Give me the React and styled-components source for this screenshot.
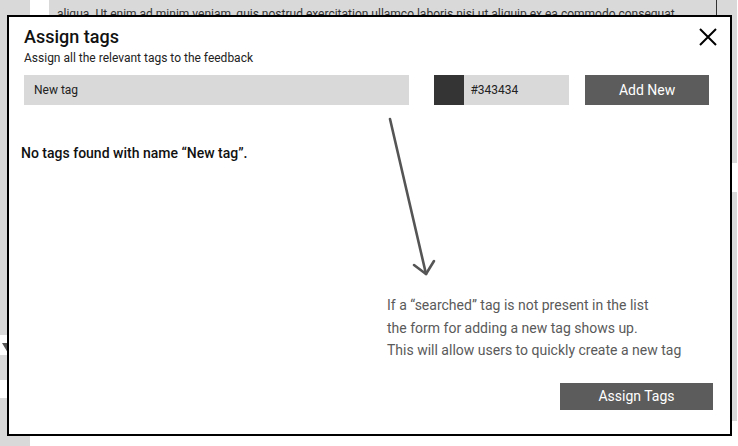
import React from 'react';
import styled, { createGlobalStyle } from 'styled-components';

const GlobalStyle = createGlobalStyle`
  html, body {
    margin: 0;
    padding: 0;
    background: #fff;
  }
  body {
    font-family: Roboto, "Liberation Sans", sans-serif;
    overflow: hidden;
  }
`;

const LEFT_BLOCKS = [
  { height: 335, filled: true },
  { height: 20, filled: false, caret: true },
  { height: 25, filled: true },
  { height: 18, filled: false },
  { height: 48, filled: true },
];

const RIGHT_BLOCKS = [
  { height: 163, filled: true },
  { height: 29, filled: false },
  { height: 229, filled: true },
  { height: 25, filled: false },
];

function BackgroundColumn({ blocks, width }) {
  return (
    <SideColumn $width={width}>
      {blocks.map((block, index) => (
        <SideBlock key={index} $height={block.height} $filled={block.filled}>
          {block.caret && <Caret />}
        </SideBlock>
      ))}
    </SideColumn>
  );
}

function CloseIcon() {
  return (
    <svg width="20" height="20" viewBox="0 0 20 20">
      <path
        d="M2 2 L18 18 M18 2 L2 18"
        stroke="#000"
        strokeWidth="2"
        fill="none"
      />
    </svg>
  );
}

function AnnotationArrow() {
  return (
    <ArrowSvg width="60" height="170" viewBox="0 0 60 170">
      <g
        stroke="#555"
        strokeWidth="2.6"
        fill="none"
        strokeLinecap="round"
        strokeLinejoin="round"
      >
        <path d="M7 2 L43 157" />
        <path d="M31 148 L43 157 L51 144" />
      </g>
    </ArrowSvg>
  );
}

function AssignTagsModal() {
  return (
    <Modal>
      <ModalHeader>
        <div>
          <ModalTitle>Assign tags</ModalTitle>
          <ModalSubtitle>Assign all the relevant tags to the feedback</ModalSubtitle>
        </div>
        <CloseButton>
          <CloseIcon />
        </CloseButton>
      </ModalHeader>

      <TagForm>
        <SearchField>New tag</SearchField>
        <ColorField>
          <ColorSwatch $color="#343434" />
          <ColorValue>#343434</ColorValue>
        </ColorField>
        <ActionButton $width={124} $height={30}>
          Add New
        </ActionButton>
      </TagForm>

      <EmptyMessage>No tags found with name “New tag”.</EmptyMessage>

      <AnnotationArrow />

      <Note>
        If a “searched” tag is not present in the list
        <br />
        the form for adding a new tag shows up.
        <br />
        This will allow users to quickly create a new tag
      </Note>

      <ModalFooter>
        <ActionButton $width={153} $height={27}>
          Assign Tags
        </ActionButton>
      </ModalFooter>
    </Modal>
  );
}

export default function App() {
  return (
    <React.Fragment>
      <GlobalStyle />
      <Page>
        <BackgroundColumn blocks={LEFT_BLOCKS} width={30} />
        <ContentCard>
          <CardText>
            aliqua. Ut enim ad minim veniam, quis nostrud exercitation ullamco
            laboris nisi ut aliquip ex ea commodo consequat
          </CardText>
        </ContentCard>
        <BackgroundColumn blocks={RIGHT_BLOCKS} width={20} />
        <AssignTagsModal />
      </Page>
    </React.Fragment>
  );
}

const Page = styled.div`
  position: relative;
  display: flex;
  align-items: flex-start;
  gap: 19px;
  width: 738px;
  height: 446px;
  overflow: hidden;
  background: #fff;
`;

const SideColumn = styled.div`
  display: flex;
  flex-direction: column;
  width: ${(p) => p.$width}px;
  flex-shrink: 0;
`;

const SideBlock = styled.div`
  position: relative;
  height: ${(p) => p.$height}px;
  flex-shrink: 0;
  background: ${(p) => (p.$filled ? '#d9d9d9' : '#fff')};
`;

const Caret = styled.div`
  position: absolute;
  left: 2px;
  top: 8px;
  width: 0;
  height: 0;
  border-left: 6px solid transparent;
  border-right: 6px solid transparent;
  border-top: 10px solid #555;
`;

const ContentCard = styled.div`
  width: 668px;
  height: 420px;
  margin-right: -19px;
  flex-shrink: 0;
  background: #d9d9d9;
  border-right: 1px solid #333;
  padding: 6px 8px 0;
  box-sizing: border-box;
`;

const CardText = styled.p`
  margin: 0;
  font-size: 12px;
  line-height: 16px;
  color: #333;
  white-space: nowrap;
`;

const Modal = styled.div`
  position: absolute;
  left: 7px;
  top: 15px;
  width: 725px;
  height: 421px;
  box-sizing: border-box;
  border: 2px solid #000;
  background: #fff;
  padding: 9px 21px 0 15px;
  display: flex;
  flex-direction: column;
`;

const ModalHeader = styled.div`
  display: flex;
  justify-content: space-between;
  align-items: flex-start;
`;

const ModalTitle = styled.h2`
  margin: 0;
  font-size: 18px;
  line-height: 21px;
  font-weight: 500;
  color: #111;
`;

const ModalSubtitle = styled.div`
  margin-top: 4px;
  font-size: 12px;
  line-height: 14px;
  color: #222;
`;

const CloseButton = styled.div`
  display: flex;
  margin-top: 1px;
  margin-right: -9px;
`;

const TagForm = styled.div`
  display: flex;
  align-items: center;
  margin-top: 10px;
  height: 30px;
`;

const SearchField = styled.div`
  width: 386px;
  height: 30px;
  box-sizing: border-box;
  padding-left: 10px;
  display: flex;
  align-items: center;
  background: #d9d9d9;
  font-size: 12px;
  color: #222;
`;

const ColorField = styled.div`
  display: flex;
  width: 135px;
  height: 30px;
  margin-left: 25px;
  background: #d9d9d9;
`;

const ColorSwatch = styled.div`
  width: 30px;
  height: 30px;
  background: ${(p) => p.$color};
`;

const ColorValue = styled.div`
  display: flex;
  align-items: center;
  padding-left: 6px;
  font-size: 12px;
  color: #222;
`;

const ActionButton = styled.div`
  display: flex;
  align-items: center;
  justify-content: center;
  width: ${(p) => p.$width}px;
  height: ${(p) => p.$height}px;
  margin-left: 16px;
  background: #5c5c5c;
  color: #fff;
  font-size: 14px;
  font-weight: 400;
`;

const EmptyMessage = styled.div`
  margin: 40px 0 0 -3px;
  font-size: 14px;
  line-height: 16px;
  font-weight: 500;
  color: #111;
`;

const ArrowSvg = styled.svg`
  position: absolute;
  left: 374px;
  top: 100px;
`;

const Note = styled.div`
  margin: 133px 0 0 363px;
  font-size: 14px;
  line-height: 22.5px;
  color: #5a5a5a;
`;

const ModalFooter = styled.div`
  display: flex;
  justify-content: flex-end;
  margin-top: 21px;
  margin-right: -4px;
`;
